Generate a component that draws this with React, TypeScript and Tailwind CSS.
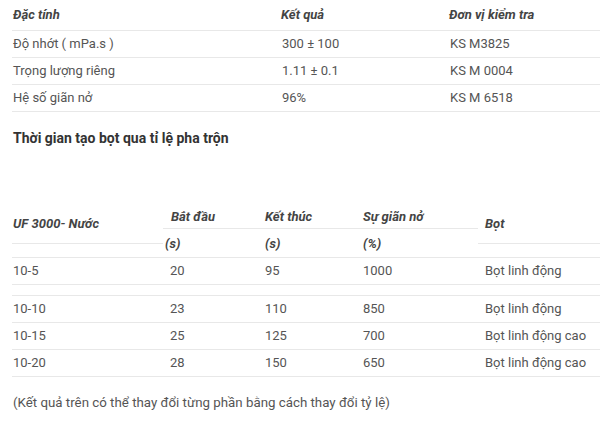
const specs = [
  { name: 'Độ nhớt ( mPa.s )', value: '300 ± 100', unit: 'KS M3825' },
  { name: 'Trọng lượng riêng', value: '1.11 ± 0.1', unit: 'KS M 0004' },
  { name: 'Hệ số giãn nở', value: '96%', unit: 'KS M 6518' },
];

const mixes = [
  { ratio: '10-10', start: '23', end: '110', grow: '850', foam: 'Bọt linh động' },
  { ratio: '10-15', start: '25', end: '125', grow: '700', foam: 'Bọt linh động cao' },
  { ratio: '10-20', start: '28', end: '150', grow: '650', foam: 'Bọt linh động cao' },
];

export default function App() {
  return (
    <div className="w-[600px] h-[422px] overflow-hidden bg-white pl-3 text-[13px] text-[#555] font-['Roboto','Liberation_Sans',sans-serif]">
      {/* Spec table */}
      <table className="w-[600px] border-collapse">
        <thead>
          <tr className="h-[30px] border-b border-[#e8e8e8]">
            <th className="w-[269px] pl-px text-left font-bold italic text-[#444]">Đặc tính</th>
            <th className="w-[168px] text-left font-bold italic text-[#444]">Kết quả</th>
            <th className="text-left font-bold italic text-[#444]">Đơn vị kiểm tra</th>
          </tr>
        </thead>
        <tbody>
          {specs.map((s) => (
            <tr key={s.name} className="h-[27px] border-b border-[#e8e8e8]">
              <td className="pl-px">{s.name}</td>
              <td className="pl-px">{s.value}</td>
              <td className="pl-px">{s.unit}</td>
            </tr>
          ))}
        </tbody>
      </table>

      <h3 className="mt-[16px] pl-px text-[14px] font-bold text-[#333] leading-[20px]">
        Thời gian tạo bọt qua tỉ lệ pha trộn
      </h3>

      {/* Mix table */}
      <div className="mt-[54px] w-[600px]">
        <div className="flex h-[56px] border-b border-[#e8e8e8] font-bold italic text-[#444]">
          <div className="w-[151px] h-[42px] border-b border-[#e8e8e8] flex items-center pl-px pt-[3px]">
            UF 3000- Nước
          </div>
          <div className="w-[315px] flex flex-col">
            <div className="h-[28px] border-b border-[#e8e8e8] flex items-center pt-[3px]">
              <span className="w-[102px] pl-2">Bắt đầu</span>
              <span className="w-[98px]">Kết thúc</span>
              <span>Sự giãn nở</span>
            </div>
            <div className="h-[28px] flex items-center pt-[2px]">
              <span className="w-[102px] pl-[2px]">(s)</span>
              <span className="w-[98px]">(s)</span>
              <span>(%)</span>
            </div>
          </div>
          <div className="flex-1 h-[42px] border-b border-[#e8e8e8] flex items-center pl-[7px] pt-[3px]">
            Bọt
          </div>
        </div>

        <div className="flex h-[27px] items-center border-b border-[#e8e8e8]">
          <span className="w-[158px] pl-px">10-5</span>
          <span className="w-[95px]">20</span>
          <span className="w-[98px]">95</span>
          <span className="w-[122px]">1000</span>
          <span>Bọt linh động</span>
        </div>
        <div className="h-[11px] border-b border-[#e8e8e8]" />
        {mixes.map((m) => (
          <div key={m.ratio} className="flex h-[27px] items-center border-b border-[#e8e8e8]">
            <span className="w-[158px] pl-px">{m.ratio}</span>
            <span className="w-[95px]">{m.start}</span>
            <span className="w-[98px]">{m.end}</span>
            <span className="w-[122px]">{m.grow}</span>
            <span>{m.foam}</span>
          </div>
        ))}

        <p className="mt-[16px] pl-px text-[13.3px]">(Kết quả trên có thể thay đổi từng phần bằng cách thay đổi tỷ lệ)</p>
      </div>
    </div>
  );
}
